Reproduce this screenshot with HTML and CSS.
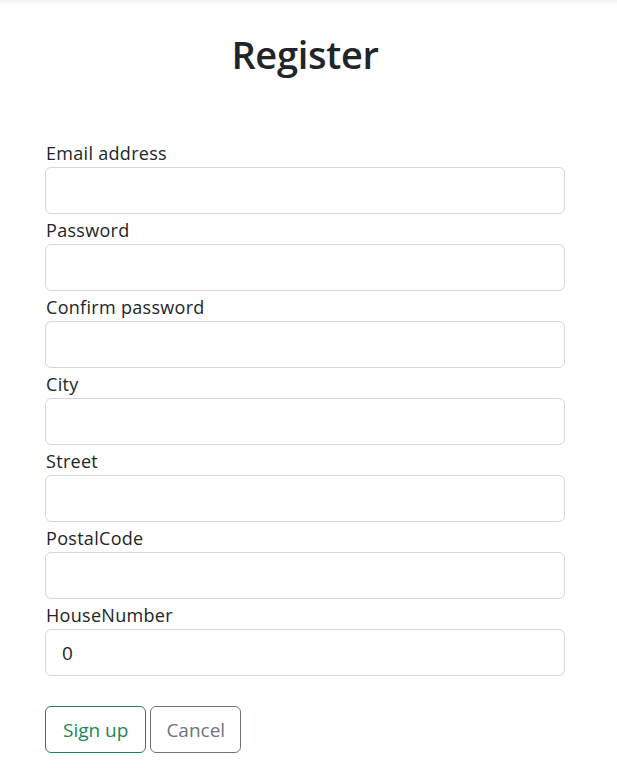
FILE: index.html
```html
<!DOCTYPE html>
<html lang="en">
<head>
<meta charset="utf-8">
<title>Register</title>
<link rel="stylesheet" href="styles.css">
</head>
<body>
<div class="topshade"></div>
<main class="page">
  <h1 class="title">Register</h1>
  <form class="form">
    <div class="field">
      <label class="label" for="email">Email address</label>
      <input class="input" id="email" type="text">
    </div>
    <div class="field">
      <label class="label" for="pw">Password</label>
      <input class="input" id="pw" type="password">
    </div>
    <div class="field">
      <label class="label" for="pw2">Confirm password</label>
      <input class="input" id="pw2" type="password">
    </div>
    <div class="field">
      <label class="label" for="city">City</label>
      <input class="input" id="city" type="text">
    </div>
    <div class="field">
      <label class="label" for="street">Street</label>
      <input class="input" id="street" type="text">
    </div>
    <div class="field">
      <label class="label" for="postal">PostalCode</label>
      <input class="input" id="postal" type="text">
    </div>
    <div class="field">
      <label class="label" for="house">HouseNumber</label>
      <input class="input" id="house" type="text" value="0">
    </div>
    <div class="actions">
      <button type="button" class="btn btn-success">Sign up</button>
      <button type="button" class="btn btn-secondary">Cancel</button>
    </div>
  </form>
</main>
</body>
</html>
```

FILE: styles.css
```css
* { box-sizing: border-box; }
html, body { margin: 0; padding: 0; background: #fff; }
body {
  font-family: "Open Sans", "Noto Sans", sans-serif;
  color: #212529;
  font-size: 16px;
}
.topshade {
  height: 6px;
  background: linear-gradient(#f3f3f3, #ffffff);
}
.page {
  width: 520px;
  margin-left: 45px;
}
.title {
  margin: 24px 0 0;
  text-align: center;
  font-size: 38px;
  font-weight: 600;
  line-height: 48px;
  letter-spacing: -0.3px;
}
.form {
  margin-top: 63px;
  display: flex;
  flex-direction: column;
}
.field {
  display: flex;
  flex-direction: column;
  margin-bottom: 4px;
}
.label {
  line-height: 24px;
  font-size: 18px;
  letter-spacing: 0.3px;
  margin-bottom: 2px;
  padding-left: 1px;
}
.input {
  height: 47px;
  width: 100%;
  border: 1px solid #d3d7dc;
  border-radius: 6px;
  padding: 0 16px;
  font-family: inherit;
  font-size: 19px;
  color: #212529;
  background: #fff;
  outline: none;
}
.actions {
  margin-top: 26px;
  display: flex;
  gap: 4px;
}
.btn {
  height: 47px;
  padding: 0 15px;
  font-family: inherit;
  font-size: 19px;
  background: #fff;
  border-radius: 6px;
  border: 1px solid;
  cursor: pointer;
}
.btn-success { color: #198754; border-color: #198754; padding: 0 17px; }
.btn-secondary { color: #6c757d; border-color: #6c757d; }
```
